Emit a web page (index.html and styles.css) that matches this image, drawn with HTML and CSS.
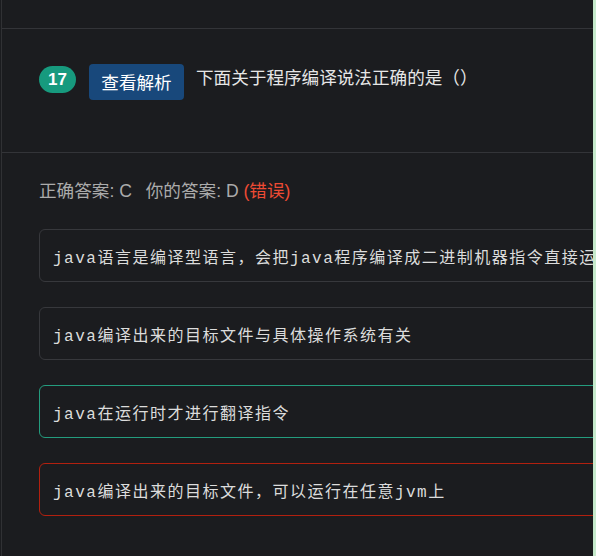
FILE: index.html
```html
<!DOCTYPE html>
<html lang="zh-CN">
<head>
<meta charset="utf-8">
<link rel="stylesheet" href="styles.css">
</head>
<body>
<div class="page">
  <div class="card">
    <div class="prev"></div>
    <div class="head">
      <span class="num">17</span>
      <button class="btn">查看解析</button>
      <span class="title">下面关于程序编译说法正确的是（）</span>
    </div>
    <div class="body">
      <div class="answer">正确答案: C <span class="gap"></span>你的答案: D <span class="wrong">(错误)</span></div>
      <div class="options">
        <div class="opt">java语言是编译型语言，会把java程序编译成二进制机器指令直接运行</div>
        <div class="opt">java编译出来的目标文件与具体操作系统有关</div>
        <div class="opt right">java在运行时才进行翻译指令</div>
        <div class="opt bad">java编译出来的目标文件，可以运行在任意jvm上</div>
      </div>
    </div>
  </div>
  <div class="strip"></div>
</div>
</body>
</html>
```
FILE: styles.css
```css
html, body {
  margin: 0;
  padding: 0;
  background: #1b1c1f;
  height: 100%;
}
body {
  font-family: "Noto Sans CJK SC", "Noto Sans", sans-serif;
  overflow: hidden;
}
.page {
  display: flex;
  height: 556px;
  padding-left: 1px;
}
.card {
  flex: 1;
  min-width: 0;
  border-left: 1px solid #303134;
  overflow: hidden;
  display: flex;
  flex-direction: column;
}
.strip {
  width: 3px;
  background: #c6eacc;
}
.prev {
  height: 28px;
  border-bottom: 1px solid #333438;
}
.head {
  display: flex;
  align-items: flex-start;
  height: 124px;
  box-sizing: border-box;
  padding: 35px 0 0 37px;
  border-bottom: 1px solid #333438;
}
.num {
  margin-top: 2px;
  width: 37px;
  height: 27px;
  border-radius: 14px;
  background: #179a7e;
  color: #fff;
  font-family: "Liberation Sans", "Noto Sans", sans-serif;
  font-weight: bold;
  font-size: 17px;
  line-height: 27px;
  text-align: center;
}
.btn {
  margin-left: 13px;
  width: 95px;
  height: 36px;
  border: 0;
  border-radius: 4px;
  background: #18487b;
  color: #fff;
  font-family: "Noto Sans CJK SC", sans-serif;
  font-size: 17.6px;
  line-height: 36px;
  padding: 0;
}
.title {
  margin-left: 12px;
  color: #e6e6e6;
  font-size: 17.6px;
  line-height: 26px;
}
.body {
  padding: 25px 0 0 37px;
}
.answer {
  color: #ababab;
  font-size: 17.6px;
  line-height: 27px;
  font-family: "Liberation Sans", "Noto Sans CJK SC", sans-serif;
}
.gap {
  display: inline-block;
  width: 9px;
}
.wrong {
  color: #ee4b34;
}
.options {
  margin-top: 24px;
  display: flex;
  flex-direction: column;
  gap: 25px;
  width: 600px;
}
.opt {
  height: 53px;
  box-sizing: border-box;
  border: 1px solid #37383c;
  border-radius: 6px;
  padding: 0 13px;
  display: flex;
  align-items: center;
  white-space: nowrap;
  color: #dcdcdc;
  font-family: "Liberation Mono", "Noto Sans CJK SC", monospace;
  font-size: 16px;
  letter-spacing: 1.5px;
}
.opt.right {
  border-color: #249c7e;
}
.opt.bad {
  border-color: #b2200f;
}
```
